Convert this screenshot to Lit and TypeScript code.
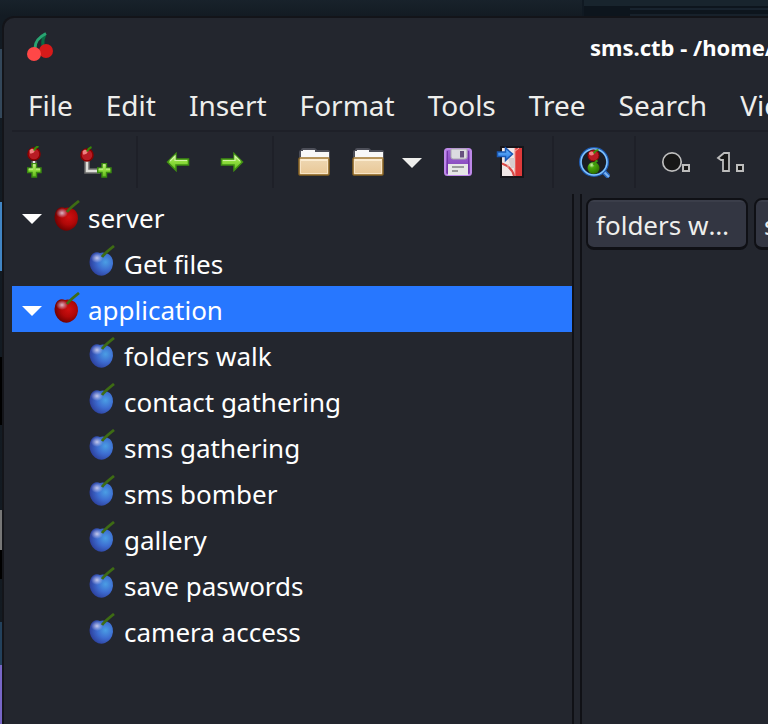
import { LitElement, html, css, svg, nothing, TemplateResult } from "lit";
import { customElement, state } from "lit/decorators.js";

const plus = (x: number, y: number) => svg`
  <path transform="translate(${x} ${y})" d="M5 .7H9.500V5H14V9.500H9.500V14H5V9.500H.7V5H5Z" fill="url(#leaf)" stroke="#3a8a10" stroke-width="1.400"/>
  <path transform="translate(${x} ${y})" d="M6 1.800H8.500M1.800 6H6M9 6H13" stroke="#d5f5a0" fill="none"/>`;

const defs = svg`<defs>
  <linearGradient id="leaf" x1="0" y1="0" x2="0" y2="1"><stop offset="0" stop-color="#c5f080"/><stop offset=".5" stop-color="#8ddc3c"/><stop offset="1" stop-color="#62b81e"/></linearGradient>
  <radialGradient id="red" cx=".6" cy=".42" r=".65"><stop offset="0" stop-color="#d01010"/><stop offset=".5" stop-color="#b00808"/><stop offset="1" stop-color="#640000"/></radialGradient>
  <radialGradient id="blue" cx=".68" cy=".42" r=".7"><stop offset="0" stop-color="#4b9ee4"/><stop offset=".5" stop-color="#3d6cd0"/><stop offset="1" stop-color="#2b3c98"/></radialGradient>
  <radialGradient id="green" cx=".35" cy=".25" r=".8"><stop offset="0" stop-color="#d0f5b0"/><stop offset=".3" stop-color="#4aa80c"/><stop offset="1" stop-color="#2a6a00"/></radialGradient>
  <radialGradient id="shine"><stop offset="0" stop-color="#e8e4f4" stop-opacity=".8"/><stop offset="1" stop-color="#d0c8f0" stop-opacity="0"/></radialGradient>
  <linearGradient id="paper" x1="0" y1="0" x2="0" y2="1"><stop offset="0" stop-color="#eed8b4"/><stop offset="1" stop-color="#e9c795"/></linearGradient>
  <linearGradient id="violet" x1="0" y1="0" x2="0" y2="1"><stop offset="0" stop-color="#a468d8"/><stop offset="1" stop-color="#7a3cb0"/></linearGradient>
  <linearGradient id="sky" x1="0" y1="0" x2="0" y2="1"><stop offset="0" stop-color="#6ab8ff"/><stop offset="1" stop-color="#2a78e0"/></linearGradient>
</defs>`;

const smallCherry = (x: number, y: number) => svg`
  <g transform="translate(${x} ${y})">
    <circle cx="7" cy="8" r="6" fill="#b81c24" stroke="#8a0000" stroke-width="1.500"/>
    <path d="M2.500 4.500C4 2 7 2.500 7.500 4.500S4.500 8 3 7.500Z" fill="#f08080"/>
    <path d="M7 4.500Q8 1.500 11.500 0" stroke="#388a08" stroke-width="2" fill="none"/>
  </g>`;

const folder = svg`
  <path d="M1 13V6Q1 4 3 4Q3 2 5 2H16Q18 2 19 4H30Q32 4 32 6V13Z" fill="#4c4e58"/>
  <path d="M3 12V5H5V4H17V6H31V12Z" fill="#f8f8f8"/>
  <rect x="1" y="12" width="30" height="17" rx="1" fill="url(#paper)" stroke="#8a6524" stroke-width="1.500"/>
  <path d="M2 12H31" stroke="#bc9a62" stroke-width="1.500"/><path d="M2.500 14H30" stroke="#fff3dc" stroke-width="1.500"/>
  <path d="M2.500 14V27.500H29.500V14" stroke="#f7e4c6" fill="none"/>`;

const icons: Record<string, unknown> = {
  nodeAdd: svg`<path d="M16 15V20" stroke="#6c6c6c" stroke-width="5"/><path d="M16 15V20" stroke="#e8e8e8" stroke-width="2"/>${smallCherry(9, 0)}${plus(9, 17)}`,
  childAdd: svg`<path d="M7 15V25H20" stroke="#6c6c6c" stroke-width="5.500" fill="none"/><path d="M7 15V25H20" stroke="#deded8" stroke-width="2.500" fill="none"/>${smallCherry(0, 1)}${plus(17, 17)}`,
  back: svg`<path d="M5.500 16L14 7.500V13H26.500V19H14V24.500Z" fill="url(#leaf)" stroke="#3f8e12" stroke-width="1.500"/><path d="M8 15L13 10V14.500H25" stroke="#d2f3a4" stroke-width="1.200" fill="none"/>`,
  forward: svg`<path d="M26.500 16L18 7.500V13H5.500V19H18V24.500Z" fill="url(#leaf)" stroke="#3f8e12" stroke-width="1.500"/><path d="M7 14.500H19V10L24 15" stroke="#d2f3a4" stroke-width="1.200" fill="none"/>`,
  folder,
  save: svg`<rect x="3" y="3" width="26" height="26" rx="2.500" fill="url(#violet)" stroke="#bd88e8" stroke-width="2"/>
    <path d="M5.500 5V27M26.500 5V27" stroke="#7435a8"/><path d="M9 3H25V11Q25 13 23 13H11Q9 13 9 11Z" fill="#dcdce0" stroke="#aaa8b0"/>
    <rect x="18" y="5" width="4" height="6.500" fill="#66507e"/><path d="M6 18H26V29H6Z" fill="#e6e6e6"/><path d="M10 21H22M10 25H16" stroke="#9a9a9c" stroke-width="2"/>`,
  pdf: svg`<path d="M4 0H28V32H4Z" fill="#17151a"/><path d="M6 2H26V30H6Z" fill="#f0e6e6"/><path d="M19 2H26V30H19Z" fill="#df3a3a"/><path d="M19 2V30" stroke="#f08b85"/>
    <path d="M12 12H19V22H15Z" fill="#d8ccce"/><path d="M6 17.500Q16 21 18 30" stroke="#d94846" stroke-width="2" fill="none"/><path d="M12 18V22M18 6L23 2" stroke="#f4b0aa" fill="none"/>
    <path d="M1.500 6H9.500V2L16.500 8L9.500 14.500V10.500H1.500Z" fill="url(#sky)" stroke="#1a58b4" stroke-width="1.500"/>`,
  find: svg`<path d="M26 26L31 31" stroke="#2968be" stroke-width="5"/><path d="M26 26L31 31" stroke="#7db4f0" stroke-width="2"/>
    <circle cx="16" cy="16" r="13.500" fill="#1b1d22" stroke="#1f5cb4" stroke-width="3"/><circle cx="16" cy="16" r="13" fill="none" stroke="#83c4fa" stroke-width="1.500"/>
    <circle cx="15.500" cy="9.500" r="5.500" fill="#b81c24" stroke="#8a0000"/><ellipse cx="13.500" cy="7.500" rx="2.500" ry="2" fill="#f08080"/>
    <circle cx="15.500" cy="22" r="6" fill="url(#green)"/><path d="M16 7.500Q16.500 4.500 20.500 4M16 19Q16.500 16 19.500 14.500" stroke="#3b9410" stroke-width="2" fill="none"/>`,
  bullets: svg`<circle cx="12" cy="16" r="9.200" fill="#171717" stroke="#bcbcbc" stroke-width="1.700"/><path d="M23 19H29V25H23Z" fill="#171717" stroke="#bcbcbc" stroke-width="2"/>`,
  numbers: svg`<path d="M10 7H15V25H9V14H7L4 12Z" fill="#171717" stroke="#bcbcbc" stroke-width="1.800"/><path d="M23 19H29V25H23Z" fill="#171717" stroke="#bcbcbc" stroke-width="2"/>`,
};

const fruit = (kind: string) => html`<svg class="fruit ${kind}" viewBox="0 0 26 32" aria-hidden="true">${defs}
  <path d="M11 8Q14 7 18 8.500Q24.500 11 24 19Q23 27 16 30Q11 32 6 28.500Q.5 24 .5 17Q1 9 6 7.500Q9 7 11 8Z" fill="url(#${kind})"/>
  <ellipse cx="8" cy="13" rx="6" ry="5" fill="url(#shine)"/>
  <path d="M13 12Q16 8 25 1" stroke="#3e6c14" stroke-width="2.800" fill="none"/></svg>`;

interface TreeNode { name: string; children?: TreeNode[] }

const tree: TreeNode[] = [
  { name: "server", children: [{ name: "Get files" }] },
  {
    name: "application",
    children: ["folders walk", "contact gathering", "sms gathering", "sms bomber", "gallery", "save paswords", "camera access"].map((name) => ({ name })),
  },
];

const menus = ["File", "Edit", "Insert", "Format", "Tools", "Tree", "Search", "View"];

const tools: { label: string; icon: string }[][] = [
  [{ label: "Add node", icon: "nodeAdd" }, { label: "Add child node", icon: "childAdd" }],
  [{ label: "Back", icon: "back" }, { label: "Forward", icon: "forward" }],
  [{ label: "Open", icon: "folder" }, { label: "Open recent", icon: "folder" }, { label: "Recent documents", icon: "drop" }, { label: "Save", icon: "save" }, { label: "Export to PDF", icon: "pdf" }],
  [{ label: "Find in nodes", icon: "find" }],
  [{ label: "Bulleted list", icon: "bullets" }, { label: "Numbered list", icon: "numbers" }],
];

@customElement("app-root")
export class AppRoot extends LitElement {
  @state() private selected = "application";
  @state() private closed: string[] = [];

  static styles = css`
    :host {
      display: flex;
      box-sizing: border-box;
      height: 100vh;
      overflow: hidden;
      position: relative;
      padding: 16px 0 0 2px;
      background: linear-gradient(#18222b, #131b23 16px, #131a21);
      color: #eeeeec;
      font: 26px/46px "Noto Sans", "Open Sans", sans-serif;
    }
    button { font: inherit; color: inherit; background: none; border: 0; padding: 0; margin: 0; white-space: nowrap; text-align: left; }
    svg { display: block; flex: none; }
    .dock { position: absolute; left: 0; top: 0; width: 2px; height: 100%; }
    .behind { position: absolute; right: 0; top: 0; width: 186px; height: 16px; box-sizing: border-box; border-left: 2px solid #101922; background: #18242d; padding-top: 6px; }
    .behind::after { content: ""; display: block; height: 10px; background: linear-gradient(#0d151d, #0d151d) 0 0 / 46px 100% no-repeat, linear-gradient(#0d151d 2px, #18232e 2px 4px, #0d151d 4px 8px, #17212b 8px); }
    .window { flex: 1; min-width: 0; display: flex; flex-direction: column; border: solid #131419; border-width: 2px 0 0 2px; border-radius: 12px 0 0 0; background: #23262e; position: relative; overflow: hidden; }
    .title { display: flex; align-items: center; height: 58px; padding: 0 0 2px 22px; flex: none; }
    .title h1 { margin: 0 0 0 536px; font-size: 22px; font-weight: 700; line-height: 30px; white-space: nowrap; color: #fff; }
    .menu { display: flex; gap: 33px; height: 52px; padding-left: 16px; margin-left: 8px; font-size: 28px; line-height: 54px; flex: none; border-bottom: 2px solid #1e2028; }
    .tools { display: flex; align-items: center; height: 60px; padding-bottom: 2px; margin-left: 8px; flex: none; }
    .group { display: flex; align-items: center; gap: 22px; height: 52px; padding: 0 24px; border-right: 2px solid #1e2028; flex: none; }
    .group:first-child { padding-left: 6px; gap: 30px; }
    .group:last-child { border: 0; }
    .tool { display: block; width: 32px; height: 32px; }
    .tool.drop { width: 20px; margin: 0 -2px 0 -4px; }
    .main { display: flex; flex: 1; min-height: 0; }
    .side { width: 560px; margin-left: 8px; border-right: 2px solid #101116; color: #fff; flex: none; }
    .grip { width: 6px; border-right: 2px solid #101116; flex: none; }
    .list { list-style: none; margin: 0; padding: 0; }
    .row { display: flex; align-items: center; height: 46px; padding-left: 10px; }
    .row.leaf { padding-left: 77px; }
    .row.on { background: #2777ff; }
    .toggle { width: 20px; height: 20px; margin-right: 12px; flex: none; }
    .tri { display: block; width: 20px; height: 20px; }
    .closed .tri { transform: rotate(-90deg); }
    .fruit { width: 26px; height: 32px; margin-bottom: 2px; }
    .fruit.blue { margin-bottom: 4px; }
    .name { flex: 1; height: 46px; padding: 4px 0 2px 8px; line-height: 40px; }
    .leaf .name { padding-left: 9px; }
    .tabs { display: flex; align-items: flex-start; gap: 6px; padding: 4px 0 0 4px; min-width: 0; flex: 1; overflow: hidden; }
    .tab { box-sizing: border-box; width: 162px; height: 52px; flex: none; padding: 2px 8px 0; line-height: 42px; border: 2px solid #0f1015; border-bottom-width: 3px; border-radius: 8px; background: linear-gradient(#3b3e4a 2px, #333642 2px); overflow: hidden; text-overflow: ellipsis; }
  `;

  private strips: [number, number, string][] = [
    [49, 118, "#33475a"], [202, 271, "#4185c4"], [357, 425, "#000"], [510, 550, "#777"], [550, 579, "#000"], [622, 665, "#23415c"], [665, 1000, "#7766c6"],
  ];

  private toggle(name: string) {
    this.closed = this.closed.includes(name) ? this.closed.filter((n) => n !== name) : [...this.closed, name];
  }

  private node(n: TreeNode): TemplateResult {
    const shut = this.closed.includes(n.name);
    return html`<li>
      <div class="row ${n.children ? "" : "leaf"} ${shut ? "closed" : ""} ${this.selected === n.name ? "on" : ""}">
        ${n.children
          ? html`<button class="toggle" aria-label="Toggle ${n.name}" aria-expanded=${!shut} @click=${() => this.toggle(n.name)}><svg class="tri" viewBox="0 0 20 20"><path d="M0 7H20L10 17Z" fill="#fff"/></svg></button>`
          : nothing}
        ${fruit(n.children ? "red" : "blue")}
        <button class="name" @click=${() => (this.selected = n.name)}>${n.name}</button>
      </div>
      ${n.children && !shut ? html`<ul class="list">${n.children.map((c) => this.node(c))}</ul>` : nothing}
    </li>`;
  }

  render() {
    return html`
      <svg class="dock" aria-hidden="true">${this.strips.map(([a, b, c]) => svg`<rect width="2" y=${a} height=${b - a} fill=${c}/>`)}</svg>
      <div class="behind"></div>
      <div class="window">
        <header class="title">
          <svg width="28" height="30" viewBox="0 0 28 30" aria-hidden="true">
            <path d="M17 14Q16 8 19 2" stroke="#086b43" stroke-width="3" fill="none"/>
            <path d="M9 16Q9 7 20 1.500" stroke="#29a472" stroke-width="3" fill="none"/>
            <circle cx="20" cy="19" r="7" fill="#d61a1a"/><circle cx="8" cy="22" r="7" fill="#ff4747"/>
          </svg>
          <h1>sms.ctb - /home/kali</h1>
        </header>
        <nav class="menu">${menus.map((m) => html`<button>${m}</button>`)}</nav>
        <div class="tools" role="toolbar">
          ${tools.map((g) => html`<div class="group">${g.map((t) => t.icon === "drop"
            ? html`<button class="tool drop" aria-label=${t.label}><svg width="20" height="32" viewBox="0 0 20 32"><path d="M0 12H20L10 22Z" fill="#eeeeec"/></svg></button>`
            : html`<button class="tool" aria-label=${t.label}><svg width="32" height="32" viewBox="0 0 32 32">${defs}${icons[t.icon]}</svg></button>`)}</div>`)}
        </div>
        <div class="main">
          <nav class="side" aria-label="Nodes"><ul class="list">${tree.map((n) => this.node(n))}</ul></nav>
          <div class="grip"></div>
          <div class="tabs"><button class="tab">folders walk</button><button class="tab">sms bomber</button></div>
        </div>
      </div>`;
  }
}
